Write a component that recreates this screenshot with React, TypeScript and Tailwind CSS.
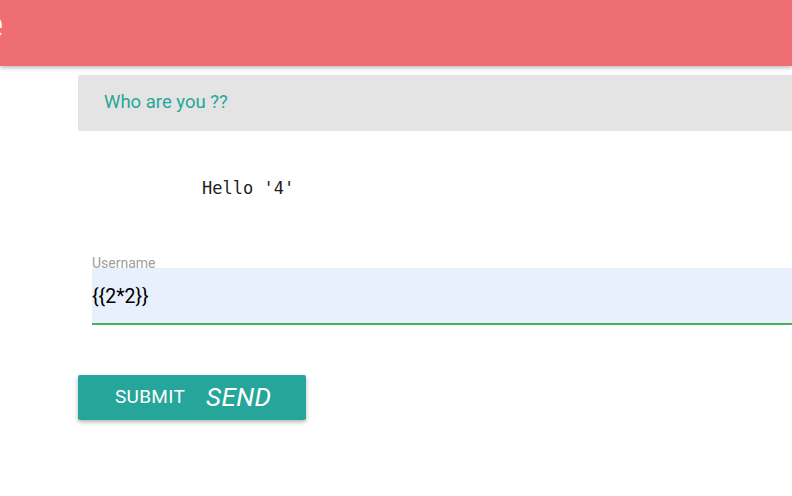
import React from "react";

const App: React.FC = () => {
  return (
    <div className="min-h-[496px] w-[792px] overflow-hidden bg-white font-['Roboto',sans-serif]">
      <header className="relative h-[66px] overflow-hidden bg-[#ef6e74] shadow-[0_2px_4px_rgba(0,0,0,0.25)]">
        <span className="absolute left-[-18px] top-[1px] text-[40px] leading-[48px] text-white">e</span>
      </header>

      <main className="pl-[78px] pt-[9px]">
        <div className="flex h-[56px] items-center rounded-l-[2px] bg-[#e4e4e4] pl-[26px]">
          <span className="text-[18.5px] text-[#26a69a]">Who are you ??</span>
        </div>

        <pre className="mt-[47px] pl-[124px] font-['DejaVu_Sans_Mono',monospace] text-[17px] leading-[20px] text-[#222]">
          Hello '4'
        </pre>

        <div className="mt-[57px] pl-[14px]">
          <label className="block text-[14px] leading-[16px] text-[#9e9e9e]">Username</label>
          <div className="-mt-[3px] flex h-[57px] items-center border-b-2 border-[#4caf50] bg-[#e8f0fe] pt-[2px]">
            <span className="text-[19.5px] text-black">{"{{2*2}}"}</span>
          </div>
        </div>

        <button
          type="button"
          className="mt-[50px] flex h-[45px] w-[228px] items-center rounded-[2px] bg-[#26a69a] pl-[37px] shadow-[0_2px_4px_rgba(0,0,0,0.3)]"
        >
          <span className="text-[19px] tracking-[0.3px] text-white">SUBMIT</span>
          <span className="ml-[21px] text-[26px] italic tracking-[0.4px] text-white">SEND</span>
        </button>
      </main>
    </div>
  );
};

export default App;
